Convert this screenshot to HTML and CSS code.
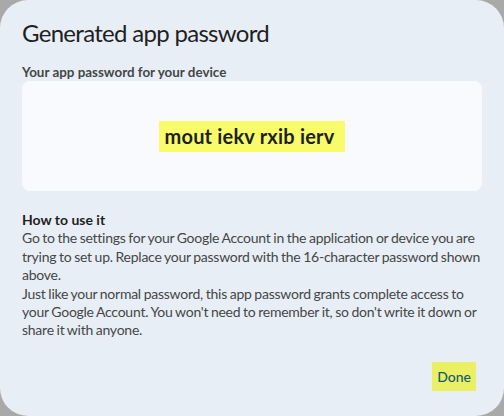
FILE: index.html
```html
<!DOCTYPE html>
<html>
<head>
<meta charset="utf-8">
<link rel="stylesheet" href="styles.css">
</head>
<body>
<div class="dialog">
  <h1 class="title">Generated app password</h1>
  <div class="label">Your app password for your device</div>
  <div class="pwbox">
    <span class="pw">mout iekv rxib ierv</span>
  </div>
  <div class="howto">
    <div class="howto-title">How to use it</div>
    <div class="howto-text">Go to the settings for your Google Account in the application or device you are trying to set up. Replace your password with the 16-character password shown above.<br>Just like your normal password, this app password grants complete access to your Google Account. You won't need to remember it, so don't write it down or share it with anyone.</div>
  </div>
  <div class="actions">
    <button class="done">Done</button>
  </div>
</div>
</body>
</html>
```
FILE: styles.css
```css
html, body {
  margin: 0;
  padding: 0;
}
body {
  background: #a9a9a9;
  width: 504px;
  height: 416px;
  overflow: hidden;
  font-family: Lato, "Noto Sans", sans-serif;
}
.dialog {
  box-sizing: border-box;
  width: 504px;
  height: 416px;
  background: #e8eef6;
  border-radius: 28px;
  padding: 17px 22px 0 22px;
  display: flex;
  flex-direction: column;
}
.title {
  margin: 0;
  font-size: 24px;
  line-height: 32px;
  font-weight: 400;
  letter-spacing: -0.7px;
  color: #1f1f1f;
}
.label {
  margin-top: 15px;
  font-size: 13.4px;
  line-height: 16px;
  font-weight: 700;
  color: #444746;
}
.pwbox {
  margin-top: 1px;
  height: 110px;
  background: #f8fafd;
  border-radius: 8px;
  display: flex;
  align-items: center;
  justify-content: center;
}
.pw {
  background: #f9fc6a;
  font-size: 20px;
  font-weight: 700;
  line-height: 31px;
  letter-spacing: 0.2px;
  padding: 0 11px 0 6px;
  color: #1f1f1f;
}
.howto {
  margin-top: 20px;
  font-size: 14px;
  line-height: 18.4px;
  color: #444746;
}
.howto-text {
  letter-spacing: -0.25px;
  word-spacing: -0.6px;
}
.howto-title {
  font-weight: 700;
  color: #1f1f1f;
}
.actions {
  margin-top: auto;
  margin-bottom: 25px;
  display: flex;
  justify-content: flex-end;
  padding-right: 6px;
}
.done {
  border: 0;
  background: #ebef63;
  font-family: inherit;
  font-size: 14px;
  font-weight: 500;
  color: #125c70;
  height: 29px;
  padding: 0 5px;
  cursor: pointer;
}
```
